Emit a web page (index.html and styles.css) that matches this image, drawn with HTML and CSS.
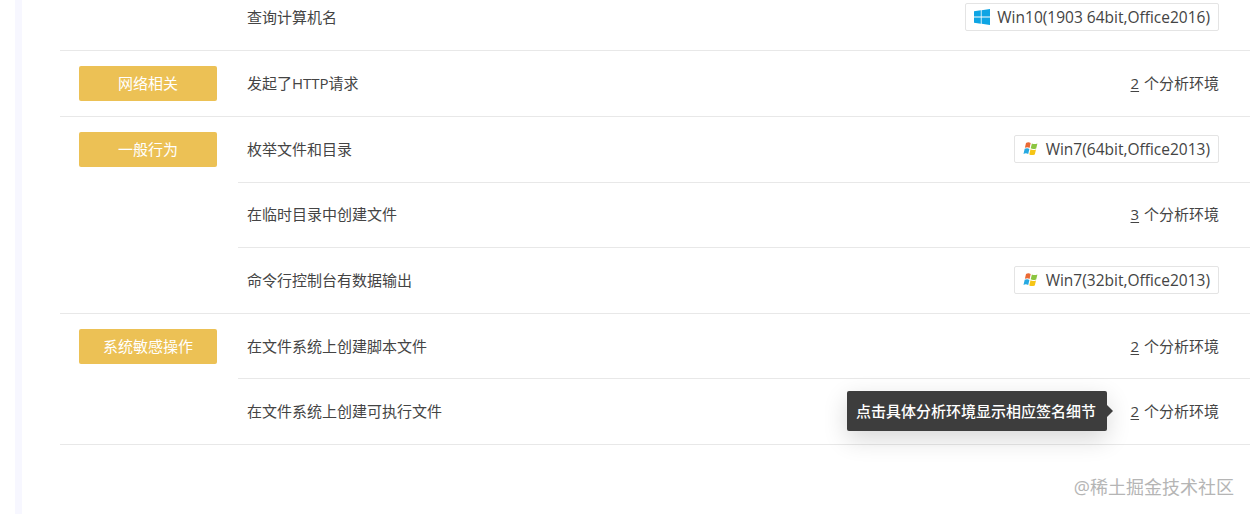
FILE: index.html
```html
<!DOCTYPE html>
<html lang="zh-CN">
<head>
<meta charset="utf-8">
<title>行为签名</title>
<link rel="stylesheet" href="styles.css">
</head>
<body>
<svg class="defs" width="0" height="0" aria-hidden="true">
  <symbol id="win10" viewBox="0 0 16 16">
    <path fill="#0ea5e4" d="M0 2.3 6.8 1.3V7.6H0ZM7.6 1.2 16 0V7.6H7.6ZM0 8.4H6.8V14.7L0 13.7ZM7.6 8.4H16V16L7.6 14.8Z"/>
  </symbol>
  <symbol id="win7" viewBox="0 0 16 16">
    <path fill="#ea6a35" d="M3 1.9C4.6 1.1 6.2 1.1 7.7 2L6.6 6.9C5.1 6 3.5 6 1.9 6.8Z"/>
    <path fill="#8cc540" d="M8.9 2.4C10.5 3.3 12.3 3.3 14.4 2.5L13.2 7.4C11.1 8.2 9.2 8.2 7.7 7.3Z"/>
    <path fill="#27a9e1" d="M1.7 7.8C3.3 7 4.9 7 6.4 7.9L5.2 13C3.7 12.1 2.1 12.1 .5 12.9Z"/>
    <path fill="#f6c516" d="M7.5 8.3C9 9.2 10.9 9.2 13 8.4L11.8 13.5C9.7 14.3 7.9 14.3 6.3 13.4Z"/>
  </symbol>
</svg>
<main class="page">
  <section class="group">
    <div class="tag-cell"></div>
    <div class="rows">
      <div class="row"><span>查询计算机名</span><span class="env"><svg class="os"><use href="#win10"/></svg>Win10(1903 64bit,Office2016)</span></div>
    </div>
  </section>
  <section class="group">
    <div class="tag-cell"><span class="tag">网络相关</span></div>
    <div class="rows">
      <div class="row"><span>发起了HTTP请求</span><span class="count"><u>2</u> 个分析环境</span></div>
    </div>
  </section>
  <section class="group">
    <div class="tag-cell"><span class="tag">一般行为</span></div>
    <div class="rows">
      <div class="row"><span>枚举文件和目录</span><span class="env"><svg class="os"><use href="#win7"/></svg>Win7(64bit,Office2013)</span></div>
      <div class="row"><span>在临时目录中创建文件</span><span class="count"><u>3</u> 个分析环境</span></div>
      <div class="row"><span>命令行控制台有数据输出</span><span class="env"><svg class="os"><use href="#win7"/></svg>Win7(32bit,Office2013)</span></div>
    </div>
  </section>
  <section class="group">
    <div class="tag-cell"><span class="tag">系统敏感操作</span></div>
    <div class="rows">
      <div class="row"><span>在文件系统上创建脚本文件</span><span class="count"><u>2</u> 个分析环境</span></div>
      <div class="row"><span>在文件系统上创建可执行文件</span>
        <span class="count has-tip"><span class="tip">点击具体分析环境显示相应签名细节</span><u>2</u> 个分析环境</span>
      </div>
    </div>
  </section>
</main>
<div class="watermark">@稀土掘金技术社区</div>
</body>
</html>
```
FILE: styles.css
```css
* { box-sizing: border-box; }
html, body { height: 100%; }
body {
  margin: 0;
  height: 514px;
  overflow: hidden;
  position: relative;
  background: #fff;
  color: #444;
  font: 15px/20px "Open Sans", "Noto Sans CJK SC", sans-serif;
}
.defs { position: absolute; }
body::before {
  content: "";
  position: absolute;
  left: 15px;
  top: 0;
  bottom: 0;
  width: 7px;
  background: #f7f7ff;
}
.page {
  margin: -14.47px 0 0 60px;
}
.group {
  display: flex;
  border-bottom: 1px solid #e8e8e8;
}
.tag-cell {
  flex: 0 0 178px;
  padding: 15.3px 0 0 19px;
}
.tag {
  display: block;
  width: 138px;
  height: 35px;
  line-height: 35px;
  text-align: center;
  color: #fff;
  background: #ecc155;
  border-radius: 2px;
}
.rows { flex: 1; }
.row {
  display: flex;
  align-items: center;
  justify-content: space-between;
  height: 64.66px;
  padding: 0 31px 1px 9px;
}
.row + .row {
  height: 65.66px;
  border-top: 1px solid #e8e8e8;
}
.env {
  display: inline-flex;
  align-items: center;
  height: 28px;
  padding: 0 8px;
  font-size: 15.5px;
  border: 1px solid #e4e4e4;
  border-radius: 2px;
}
.os { width: 16px; height: 16px; margin-right: 7px; }
.count { position: relative; }
.count u { text-underline-offset: 2px; margin-right: 1px; }
.tip {
  position: absolute;
  right: 112px;
  top: 50%;
  transform: translateY(-50%);
  width: 260px;
  height: 40px;
  line-height: 40px;
  padding-left: 9px;
  white-space: nowrap;
  font-weight: 500;
  color: #fff;
  background: #3d3d3d;
  border-radius: 2px;
  box-shadow: 0 8px 24px rgba(0, 0, 0, .16);
}
.tip::after {
  content: "";
  position: absolute;
  left: 100%;
  top: 50%;
  margin-top: -6px;
  border: 6px solid transparent;
  border-right: 0;
  border-left-color: #3d3d3d;
}
.watermark {
  position: absolute;
  right: 16px;
  top: 476px;
  font-size: 18px;
  line-height: 22px;
  color: #b5b5b5;
}
```
